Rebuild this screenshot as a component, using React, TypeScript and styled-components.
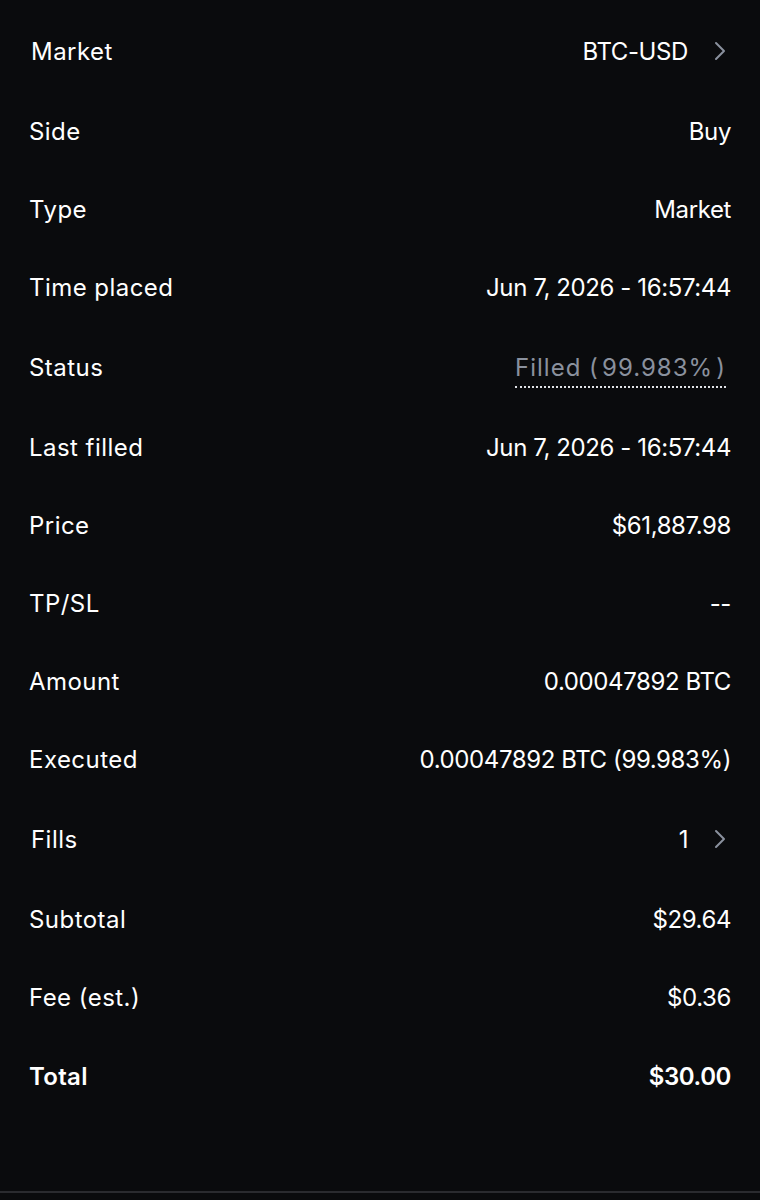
import React from "react";
import styled, { createGlobalStyle } from "styled-components";

const Global = createGlobalStyle`
  html, body { margin: 0; padding: 0; background: #0a0b0d; }
  body { font-family: Inter, "Noto Sans", sans-serif; color: #fff; }
`;

const Page = styled.div`
  width: 760px;
  height: 1200px;
  background: #0a0b0d;
  display: flex;
  flex-direction: column;
  box-sizing: border-box;
  padding-top: 10px;
`;

const List = styled.div`
  display: flex;
  flex-direction: column;
  padding: 0 29px;
  flex: 1;
`;

const Row = styled.div<{ $h: number; $inset?: boolean }>`
  height: ${(p) => p.$h}px;
  display: flex;
  align-items: center;
  justify-content: space-between;
  padding-left: ${(p) => (p.$inset ? 2 : 0)}px;
  padding-right: ${(p) => (p.$inset ? 5 : 0)}px;
`;

const Label = styled.span<{ $bold?: boolean }>`
  font-size: 24px;
  font-weight: ${(p) => (p.$bold ? 600 : 400)};
  color: #fff;
  letter-spacing: ${(p) => (p.$bold ? 0.3 : 0.45)}px;
`;

const Value = styled.span<{ $bold?: boolean }>`
  font-size: 24px;
  font-weight: ${(p) => (p.$bold ? 600 : 400)};
  color: #fff;
  display: flex;
  align-items: center;
  gap: 26px;
  letter-spacing: -0.4px;
`;

const StatusValue = styled.span`
  font-size: 24px;
  color: #8a919e;
  padding-bottom: 4px;
  border-bottom: 2px dotted #e0e2e6;
  margin-top: 6px;
  margin-right: 5px;
  letter-spacing: 1px;
`;

const Chevron = () => (
  <svg width="12" height="20" viewBox="0 0 12 20" fill="none">
    <path d="M2 2 L10 10 L2 18" stroke="#8a919e" strokeWidth="2" strokeLinecap="round" strokeLinejoin="round" />
  </svg>
);

const Divider = styled.div`
  height: 2px;
  background: #2a2b2f;
  margin-bottom: 7px;
`;

type Item = { label: string; value: React.ReactNode; h: number; chevron?: boolean; bold?: boolean; status?: boolean };

const items: Item[] = [
  { label: "Market", value: "BTC-USD", h: 82, chevron: true },
  { label: "Side", value: "Buy", h: 78 },
  { label: "Type", value: "Market", h: 78 },
  { label: "Time placed", value: "Jun 7, 2026 - 16:57:44", h: 78 },
  { label: "Status", value: "Filled (\u200A99.983%\u200A)", h: 82, status: true },
  { label: "Last filled", value: "Jun 7, 2026 - 16:57:44", h: 78 },
  { label: "Price", value: "$61,887.98", h: 78 },
  { label: "TP/SL", value: "--", h: 78 },
  { label: "Amount", value: "0.00047892 BTC", h: 78 },
  { label: "Executed", value: "0.00047892 BTC (99.983%)", h: 78 },
  { label: "Fills", value: "1", h: 82, chevron: true },
  { label: "Subtotal", value: "$29.64", h: 78 },
  { label: "Fee (est.)", value: "$0.36", h: 78 },
  { label: "Total", value: "$30.00", h: 80, bold: true },
];

export default function App() {
  return (
    <>
      <Global />
      <Page>
        <List>
          {items.map((it) => (
            <Row key={it.label} $h={it.h} $inset={it.chevron}>
              <Label $bold={it.bold}>{it.label}</Label>
              {it.status ? (
                <StatusValue>{it.value}</StatusValue>
              ) : (
                <Value $bold={it.bold}>
                  {it.value}
                  {it.chevron && <Chevron />}
                </Value>
              )}
            </Row>
          ))}
        </List>
        <Divider />
      </Page>
    </>
  );
}
